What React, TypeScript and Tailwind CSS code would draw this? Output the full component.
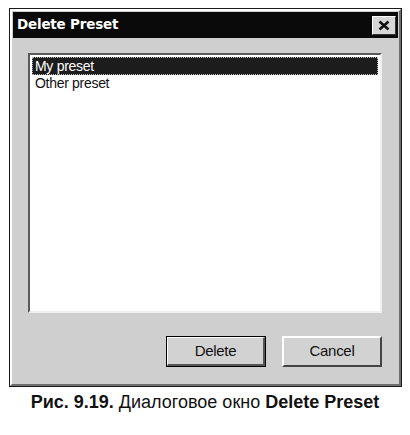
import React from "react";

export default function App() {
  return (
    <div className="w-[410px] h-[435px] bg-white relative overflow-hidden" style={{ fontFamily: '"Liberation Sans", Arial, sans-serif' }}>
      <div className="pt-[8px] pl-[9px]">
        {/* dialog */}
        <div className="w-[393px] h-[379px] border border-[#1a1a1a] bg-[#cfcfcf] flex flex-col">
          <div className="flex-1 flex flex-col border-t-2 border-l-2 border-t-white border-l-white border-r-2 border-b-2 border-r-[#6e6e6e] border-b-[#6e6e6e]">
            {/* title bar */}
            <div className="h-[26px] bg-[#0a0a0a] flex items-center justify-between pl-[4px] pr-[2px] mt-[1px] mx-[1px]">
              <span className="text-white font-bold leading-none tracking-[-0.2px]" style={{ fontFamily: '"DejaVu Sans", Verdana, sans-serif', fontSize: '13.5px' }}>Delete Preset</span>
              <div className="w-[24px] h-[19px] bg-[#d6d6d6] border-t border-l border-t-white border-l-white border-r border-b border-r-[#333] border-b-[#333] flex items-center justify-center">
                <svg width="12" height="11" viewBox="0 0 12 11">
                  <path d="M1.5 1.5 L10.5 9.5 M10.5 1.5 L1.5 9.5" stroke="#111" strokeWidth="2.6" />
                </svg>
              </div>
            </div>
            {/* content */}
            <div className="flex-1 flex flex-col pl-[16px] pr-[17px] pt-[15px]">
              <div className="h-[260px] bg-white border-t-2 border-l-2 border-t-[#5a5a5a] border-l-[#5a5a5a] border-r-2 border-b-2 border-r-[#f0f0f0] border-b-[#f0f0f0] pt-[2px] px-[2px]">
                <div className="h-[18px] bg-[#1c1c1c] text-white text-[14px] leading-[17px] pl-[2px] border border-dotted border-[#bbbbbb] tracking-[-0.3px]">My preset</div>
                <div className="h-[18px] text-[#111] text-[14px] leading-[17px] pl-[3px] tracking-[-0.3px]">Other preset</div>
              </div>
              <div className="flex justify-end gap-[16px] mt-[23px]">
                <div className="w-[100px] h-[31px] border border-black bg-[#d2d2d2] flex">
                  <div className="flex-1 flex items-center justify-center border-t border-l border-t-white border-l-white border-r-2 border-b-2 border-r-[#555] border-b-[#555] text-[15px] text-[#111] tracking-[-0.3px]">Delete</div>
                </div>
                <div className="w-[100px] h-[31px] bg-[#d2d2d2] flex border-t-2 border-l-2 border-t-white border-l-white border-r-2 border-b-2 border-r-[#444] border-b-[#444]">
                  <div className="flex-1 flex items-center justify-center text-[15px] text-[#111] tracking-[-0.3px]">Cancel</div>
                </div>
              </div>
            </div>
          </div>
        </div>
      </div>
      <div className="mt-[4px] text-center text-[18px] text-[#111] leading-[22px]">
        <span className="font-bold">Рис. 9.19.</span> Диалоговое окно <span className="font-bold">Delete Preset</span>
      </div>
    </div>
  );
}
